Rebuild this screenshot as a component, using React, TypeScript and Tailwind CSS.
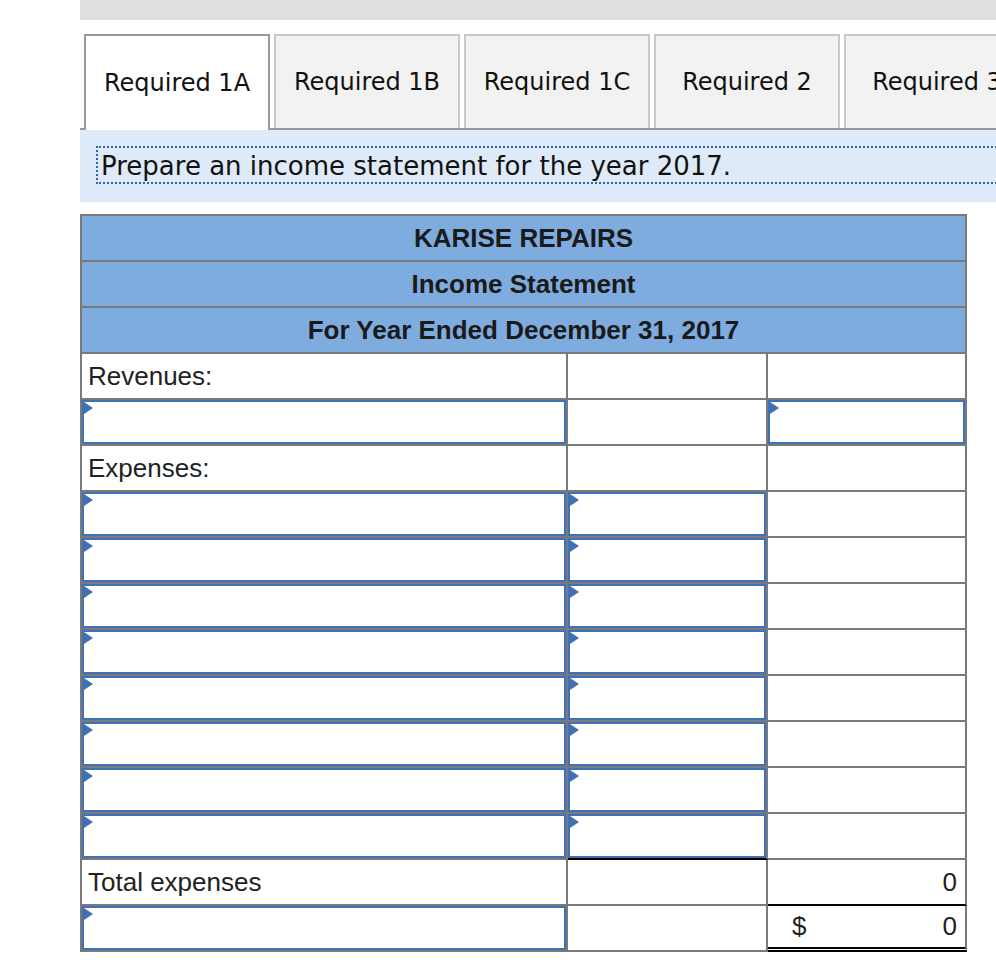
import React from 'react';

const tabs = ['Required 1A', 'Required 1B', 'Required 1C', 'Required 2', 'Required 3'];

type Cell = { kind: 'label' | 'input' | 'blank' | 'num' | 'dollar'; text?: string; extra?: string };

function InputBox() {
  return (
    <div className="relative h-full w-full border-2 border-[#4070b5] bg-white">
      <svg className="absolute left-0 top-0" width="9" height="12" viewBox="0 0 9 12">
        <polygon points="0,0 9,6 0,12" fill="#4070b5" />
      </svg>
    </div>
  );
}

function BodyCell({ cell, width }: { cell: Cell; width: string }) {
  const base = `h-[46px] border-r-2 border-b-2 border-[#7a7a7a] bg-white ${width} ${cell.extra ?? ''}`;
  if (cell.kind === 'input') {
    return (
      <div className={base}>
        <InputBox />
      </div>
    );
  }
  if (cell.kind === 'label') {
    return <div className={`${base} flex items-center pl-[6px]`}>{cell.text}</div>;
  }
  if (cell.kind === 'num') {
    return <div className={`${base} flex items-center justify-end pr-[8px]`}>{cell.text}</div>;
  }
  if (cell.kind === 'dollar') {
    return (
      <div className={`${base} flex items-center justify-between pl-[24px] pr-[8px]`}>
        <span>$</span>
        <span>{cell.text}</span>
      </div>
    );
  }
  return <div className={base} />;
}

export default function App() {
  const expenseRow: Cell[] = [{ kind: 'input' }, { kind: 'input' }, { kind: 'blank' }];

  const rows: Cell[][] = [
    [{ kind: 'label', text: 'Revenues:' }, { kind: 'blank' }, { kind: 'blank' }],
    [{ kind: 'input' }, { kind: 'blank' }, { kind: 'input' }],
    [{ kind: 'label', text: 'Expenses:' }, { kind: 'blank' }, { kind: 'blank' }],
    expenseRow,
    expenseRow,
    expenseRow,
    expenseRow,
    expenseRow,
    expenseRow,
    expenseRow,
    [{ kind: 'input' }, { kind: 'input', extra: 'border-b-black' }, { kind: 'blank' }],
    [
      { kind: 'label', text: 'Total expenses' },
      { kind: 'blank' },
      { kind: 'num', text: '0', extra: 'border-b-black' },
    ],
    [
      { kind: 'input' },
      { kind: 'blank' },
      { kind: 'dollar', text: '0', extra: 'border-b-[5px] border-double border-b-black' },
    ],
  ];

  const widths = ['w-[486px]', 'w-[200px]', 'w-[199px]'];

  return (
    <div className="w-[996px] h-[960px] overflow-hidden bg-white">
      <div className="ml-[80px] w-[940px]">
        <div className="h-[20px] bg-[#e0e0e0]" />

        {/* tabs */}
        <div className="mt-[14px] flex gap-[4px] border-b-2 border-[#999] pl-[4px] font-['DejaVu_Sans',sans-serif] text-[24px] text-[#111]">
          {tabs.map((t, i) =>
            i === 0 ? (
              <div
                key={t}
                className="-mb-[2px] flex h-[96px] w-[186px] shrink-0 items-center justify-center border-2 border-b-0 border-[#999] bg-white whitespace-nowrap"
              >
                {t}
              </div>
            ) : (
              <div
                key={t}
                className="flex h-[94px] w-[186px] shrink-0 items-center justify-center border-2 border-b-0 border-[#c8c8c8] bg-[#f2f2f2] whitespace-nowrap"
              >
                {t}
              </div>
            )
          )}
        </div>

        {/* prompt */}
        <div className="h-[72px] bg-[#deeaf7] pl-[16px] pt-[16px]">
          <div className="h-[38px] border-[2px] border-dotted border-[#2f63b3] pl-[3px] font-['DejaVu_Sans',sans-serif] text-[26px] leading-[36px] text-[#111]">
            Prepare an income statement for the year 2017.
          </div>
        </div>

        {/* statement */}
        <div className="mt-[12px] w-[887px] border-l-2 border-t-2 border-[#7a7a7a] font-['Liberation_Sans',Arial,sans-serif] text-[26px] text-[#222]">
          {['KARISE REPAIRS', 'Income Statement', 'For Year Ended December 31, 2017'].map((h) => (
            <div
              key={h}
              className="flex h-[46px] items-center justify-center border-r-2 border-b-2 border-[#7a7a7a] bg-[#7facdf] font-bold text-[#1a1a1a]"
            >
              {h}
            </div>
          ))}
          {rows.map((r, ri) => (
            <div key={ri} className="flex">
              {r.map((c, ci) => (
                <BodyCell key={ci} cell={c} width={widths[ci]} />
              ))}
            </div>
          ))}
        </div>
      </div>
    </div>
  );
}
